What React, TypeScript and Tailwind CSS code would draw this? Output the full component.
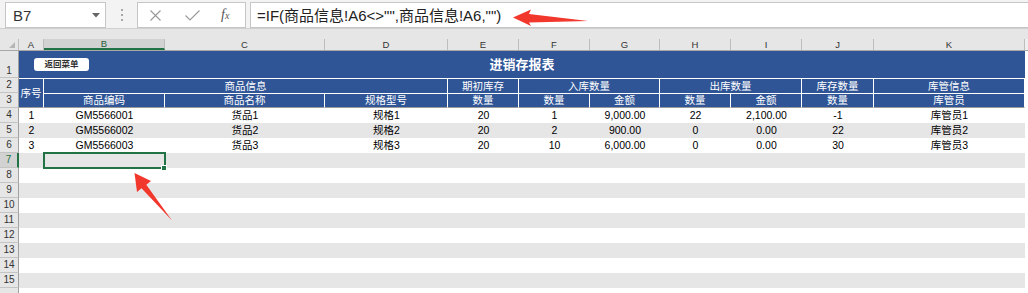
import React from "react";

const colW = [
  "w-[25px]",
  "w-[121px]",
  "w-[160px]",
  "w-[123px]",
  "w-[71px]",
  "w-[71px]",
  "w-[70px]",
  "w-[71px]",
  "w-[71px]",
  "w-[72px]",
  "w-[151px]",
];
const colLetters = ["A", "B", "C", "D", "E", "F", "G", "H", "I", "J", "K"];

const data: string[][] = [
  ["1", "GM5566001", "货品1", "规格1", "20", "1", "9,000.00", "22", "2,100.00", "-1", "库管员1"],
  ["2", "GM5566002", "货品2", "规格2", "20", "2", "900.00", "0", "0.00", "22", "库管员2"],
  ["3", "GM5566003", "货品3", "规格3", "20", "10", "6,000.00", "0", "0.00", "30", "库管员3"],
];

const rowNums = [4, 5, 6, 7, 8, 9, 10, 11, 12, 13, 14, 15, 16];

function RowHead({ n, h, bottom, selected }: { n: number | null; h: string; bottom?: boolean; selected?: boolean }) {
  return (
    <div
      className={`w-[19px] shrink-0 ${h} border-b border-[#c4c4c4] flex justify-center ${
        bottom ? "items-end pb-[1px]" : "items-center"
      } text-[10px] leading-none ${
        selected
          ? "bg-[#d2d2d2] text-[#217346] border-r-2 border-r-[#217346]"
          : "bg-[#e6e6e6] text-[#333] border-r border-r-[#a0a0a0]"
      }`}
    >
      {n}
    </div>
  );
}

export default function App() {
  return (
    <div className="w-[1028px] h-[293px] overflow-hidden relative bg-white font-['Liberation_Sans','Noto_Sans_CJK_SC',sans-serif]">
      {/* toolbar */}
      <div className="h-[29px] bg-[#f3f3f3] border-b border-[#d0d0d0] flex items-start pt-[2px]">
        <div className="ml-[5px] w-[101px] h-[26px] shrink-0 bg-white border border-[#c6c6c6] flex items-center justify-between pl-[7px] pr-[5px]">
          <span className="text-[15px] text-[#333] leading-none">B7</span>
          <svg width="8" height="5" viewBox="0 0 8 5">
            <path d="M0 0 L8 0 L4 4.5 Z" fill="#666" />
          </svg>
        </div>
        <div className="ml-[15px] w-[2px] h-[26px] flex flex-col justify-center gap-[3px]">
          <div className="w-[2px] h-[2px] bg-[#a8a8a8]" />
          <div className="w-[2px] h-[2px] bg-[#a8a8a8]" />
          <div className="w-[2px] h-[2px] bg-[#a8a8a8]" />
        </div>
        <div className="ml-[14px] w-[109px] h-[26px] shrink-0 bg-white border border-[#c6c6c6] flex items-center pl-[12px]">
          <svg width="11" height="11" viewBox="0 0 11 11">
            <path d="M0.5 0.5 L10.5 10.5 M10.5 0.5 L0.5 10.5" stroke="#9a9a9a" strokeWidth="1.2" fill="none" />
          </svg>
          <svg className="ml-[24px]" width="15" height="11" viewBox="0 0 15 11">
            <path d="M0.5 5.5 L5 10 L14.5 0.5" stroke="#9a9a9a" strokeWidth="1.2" fill="none" />
          </svg>
          <span className="ml-[21px] font-['Liberation_Serif',serif] italic text-[14px] text-[#555] leading-none">
            f<span className="text-[10px]">x</span>
          </span>
        </div>
        <div className="ml-[4px] w-[790px] h-[26px] shrink-0 bg-white border border-[#c6c6c6] flex items-center pl-[6px]">
          <span className="text-[15px] text-[#222] leading-none">=IF(商品信息!A6&lt;&gt;"",商品信息!A6,"")</span>
        </div>
      </div>
      {/* band */}
      <div className="h-[10px] bg-[#e6e6e6]" />
      {/* column headers */}
      <div className="h-[12px] flex bg-[#e6e6e6] border-b border-[#a8a8a8]">
        <div className="w-[19px] shrink-0 relative border-r border-[#bdbdbd]">
          <svg className="absolute right-[3px] bottom-[2px]" width="6" height="6" viewBox="0 0 6 6">
            <path d="M6 0 L6 6 L0 6 Z" fill="#b5b5b5" />
          </svg>
        </div>
        {colLetters.map((l, i) => (
          <div
            key={l}
            className={`${colW[i]} shrink-0 flex items-center justify-center text-[9.5px] leading-none border-r border-[#bdbdbd] ${
              i === 1 ? "bg-[#d2d2d2] border-b-2 border-b-[#217346] text-[#1e5a36]" : "text-[#333]"
            }`}
          >
            {l}
          </div>
        ))}
        <div className="flex-1 bg-[#eeeeee]" />
      </div>
      {/* sheet */}
      <div className="relative">
        {/* header block */}
        <div className="flex">
          <div className="flex flex-col">
            <RowHead n={1} h="h-[27px]" bottom />
            <RowHead n={2} h="h-[15px]" />
            <RowHead n={3} h="h-[15px]" />
          </div>
          <div className="grid grid-cols-[25px_121px_160px_123px_71px_71px_70px_71px_71px_72px_151px] grid-rows-[27px_15px_15px] bg-[#2f5597] text-white text-[10.5px] leading-none">
            <div className="col-span-11 relative flex items-center justify-center">
              <span className="text-[13px] font-bold">进销存报表</span>
              <div className="absolute left-[15px] top-[7px] w-[55px] h-[13px] bg-white rounded-[3px] flex items-center justify-center text-[8.5px] font-bold text-[#333]">
                返回菜单
              </div>
            </div>
            <div className="row-span-2 border-t border-r border-white border-b border-b-[#9a9a9a] flex items-center justify-center">
              序号
            </div>
            <div className="col-span-3 border-t border-r border-white flex items-center justify-center">商品信息</div>
            <div className="border-t border-r border-white flex items-center justify-center">期初库存</div>
            <div className="col-span-2 border-t border-r border-white flex items-center justify-center">入库数量</div>
            <div className="col-span-2 border-t border-r border-white flex items-center justify-center">出库数量</div>
            <div className="border-t border-r border-white flex items-center justify-center">库存数量</div>
            <div className="border-t border-r border-white flex items-center justify-center">库管信息</div>
            {["商品编码", "商品名称", "规格型号", "数量", "数量", "金额", "数量", "金额", "数量", "库管员"].map((t, i) => (
              <div
                key={i}
                className="border-t border-r border-white border-b border-b-[#9a9a9a] flex items-center justify-center"
              >
                {t}
              </div>
            ))}
          </div>
          <div className="flex-1 bg-white" />
        </div>
        {/* data rows */}
        {rowNums.map((r) => {
          const d = data[r - 4];
          const gray = r % 2 === 1;
          return (
            <div key={r} className="flex h-[15px]">
              <RowHead n={r === 16 ? null : r} h="h-[15px]" selected={r === 7} />
              <div className={`flex ${gray ? "bg-[#e6e6e6]" : "bg-white"}`}>
                {colW.map((w, i) => (
                  <div
                    key={i}
                    className={`${w} shrink-0 flex items-center justify-center text-[10.5px] leading-none text-black`}
                  >
                    {d ? d[i] : ""}
                  </div>
                ))}
              </div>
              <div className="flex-1 bg-white" />
            </div>
          );
        })}
        {/* selection */}
        <div className="absolute left-[43px] top-[101px] w-[123px] h-[17px] border-2 border-[#217346]" />
        <div className="absolute left-[161px] top-[114px] w-[6px] h-[6px] bg-[#217346] border border-white" />
      </div>
      {/* annotation arrows */}
      <svg className="absolute left-0 top-0 pointer-events-none" width="1028" height="293" viewBox="0 0 1028 293">
        <polygon points="513,17.5 531,9.5 529,14 588,21 529,22.5 531,26" fill="#f2382d" />
        <polygon points="134.5,173 151,181 146.3,184.7 172,220.5 141.5,188.3 137,192" fill="#f2382d" />
      </svg>
    </div>
  );
}
